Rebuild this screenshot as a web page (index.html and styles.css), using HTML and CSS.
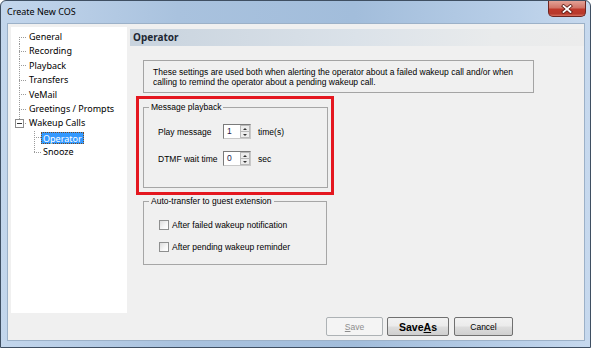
FILE: index.html
```html
<!DOCTYPE html>
<html lang="en">
<head>
    <meta charset="UTF-8">
    <title>Create New COS</title>
    <link rel="stylesheet" href="styles.css">
</head>
<body>
    <div class="window">
        <div class="titlebar">
            <span class="title">Create New COS</span>
            <button class="close" title="Close">
                <svg width="12" height="10" viewBox="0 0 12 10">
                    <path d="M2.5 2 L9.5 8 M9.5 2 L2.5 8" stroke="#5a1a14" stroke-width="3.4" stroke-linecap="square"/>
                    <path d="M2.5 2 L9.5 8 M9.5 2 L2.5 8" stroke="#ffffff" stroke-width="1.8" stroke-linecap="square"/>
                </svg>
            </button>
        </div>

        <div class="client">
            <div class="main">
                <!-- arbre des pages -->
                <div class="tree">
                    <div class="node first"><span class="twig"></span><span class="label">General</span></div>
                    <div class="node"><span class="twig"></span><span class="label">Recording</span></div>
                    <div class="node"><span class="twig"></span><span class="label">Playback</span></div>
                    <div class="node"><span class="twig"></span><span class="label">Transfers</span></div>
                    <div class="node"><span class="twig"></span><span class="label">VeMail</span></div>
                    <div class="node"><span class="twig"></span><span class="label">Greetings / Prompts</span></div>
                    <div class="node last"><span class="twig"><span class="expander"></span></span><span class="label">Wakeup Calls</span></div>
                    <div class="node child"><span class="twig"></span><span class="label selected">Operator</span></div>
                    <div class="node child last"><span class="twig"></span><span class="label">Snooze</span></div>
                </div>

                <div class="pane">
                    <div class="pane-head">Operator</div>

                    <div class="note">
                        These settings are used both when alerting the operator about a failed wakeup call and/or when<br>
                        calling to remind the operator about a pending wakeup call.
                    </div>

                    <div class="highlight">
                        <fieldset class="group group-play">
                            <legend>Message playback</legend>
                            <div class="field-grid">
                                <span class="field-label">Play message</span>
                                <span class="spin"><span class="spin-value">1</span><span class="spin-arrows"><span class="up"></span><span class="down"></span></span></span>
                                <span class="unit">time(s)</span>

                                <span class="field-label">DTMF wait time</span>
                                <span class="spin"><span class="spin-value">0</span><span class="spin-arrows"><span class="up"></span><span class="down"></span></span></span>
                                <span class="unit">sec</span>
                            </div>
                        </fieldset>
                    </div>

                    <fieldset class="group group-auto">
                        <legend>Auto-transfer to guest extension</legend>
                        <div class="checks">
                            <label class="check"><span class="box"></span>After failed wakeup notification</label>
                            <label class="check"><span class="box"></span>After pending wakeup reminder</label>
                        </div>
                    </fieldset>
                </div>
            </div>

            <div class="buttons">
                <button class="btn btn-save" disabled><u>S</u>ave</button>
                <button class="btn btn-saveas">Save<u>A</u>s</button>
                <button class="btn btn-cancel">Cancel</button>
            </div>
        </div>
    </div>
</body>
</html>
```

FILE: styles.css
```css
body {
    margin: 0;
    padding: 0;
    background-color: #ffffff;
}

.window {
    width: 591px;
    height: 348px;
    box-sizing: border-box;
    border: 1px solid #3f4f62;
    border-radius: 6px 6px 0 0;
    background: linear-gradient(to right, #c3d6ec 0%, #a9c2de 30%, #a2bddb 60%, #b9cfe8 88%, #c7d9ee 100%);
    display: flex;
    flex-direction: column;
}

.titlebar {
    height: 22px;
    display: flex;
    align-items: flex-start;
}

.title {
    font-family: "Noto Sans", sans-serif;
    font-size: 9px;
    color: #000;
    padding: 4px 0 0 6px;
}

.close {
    margin-left: auto;
    margin-right: 4px;
    width: 38px;
    height: 16px;
    padding: 0;
    border: 1px solid #6e2520;
    border-top: none;
    border-radius: 0 0 5px 5px;
    background: linear-gradient(to bottom, #e3a196 0%, #d27568 45%, #c0392b 55%, #b7392c 85%, #d8705f 100%);
    display: flex;
    align-items: center;
    justify-content: center;
}

.client {
    flex: 1;
    margin: 0 5px 6px 6px;
    border: 1px solid #9cb1c8;
    background-color: #f0f0f0;
    padding: 3px 0 0 3px;
    display: flex;
    flex-direction: column;
}

.main {
    display: flex;
}

/* arbre */
.tree {
    width: 116px;
    height: 286px;
    box-sizing: border-box;
    background-color: #fff;
    padding: 3px 0 0 4px;
    font-family: "Noto Sans", sans-serif;
    font-size: 9px;
    color: #000;
}

.node {
    height: 14.4px;
    display: flex;
    align-items: stretch;
}

.twig {
    width: 12px;
    flex-shrink: 0;
    display: flex;
    align-items: center;
    background:
        repeating-linear-gradient(to bottom, #9a9a9a 0 1px, transparent 1px 2px) 4px 0 / 1px 100% no-repeat,
        repeating-linear-gradient(to right, #9a9a9a 0 1px, transparent 1px 2px) 4px 50% / 7px 1px no-repeat;
}

.node.first .twig {
    background:
        repeating-linear-gradient(to bottom, #9a9a9a 0 1px, transparent 1px 2px) 4px 100% / 1px 50% no-repeat,
        repeating-linear-gradient(to right, #9a9a9a 0 1px, transparent 1px 2px) 4px 50% / 7px 1px no-repeat;
}

.node.last .twig {
    background:
        repeating-linear-gradient(to bottom, #9a9a9a 0 1px, transparent 1px 2px) 4px 0 / 1px 50% no-repeat,
        repeating-linear-gradient(to right, #9a9a9a 0 1px, transparent 1px 2px) 4px 50% / 7px 1px no-repeat;
}

.node.child {
    padding-left: 15px;
}

.node.child .twig {
    width: 11px;
}

.expander {
    width: 9px;
    height: 9px;
    box-sizing: border-box;
    border: 1px solid #8c8c8c;
    background: #fff linear-gradient(#333, #333) center / 5px 1px no-repeat;
}

.label {
    padding: 0 2px;
    line-height: 14px;
    white-space: nowrap;
}

.label.selected {
    background-color: #3399ff;
    color: #fff;
    border: 1px dotted #7a4a1e;
    line-height: 11px;
    margin: 1px 0;
    padding: 0 1px;
}

/* panneau */
.pane {
    flex: 1;
    margin-left: 3px;
    padding-top: 2px;
    font-family: "Liberation Sans", Arial, sans-serif;
    font-size: 8.5px;
    color: #000;
}

.pane-head {
    height: 17px;
    line-height: 17px;
    padding-left: 3px;
    font-family: "Noto Sans", sans-serif;
    font-weight: bold;
    font-size: 10px;
    color: #1d2834;
    background: linear-gradient(to right, #c8d3de 0%, #dbe2e9 50%, #e9ebec 80%, #ececec 100%);
}

.note {
    margin: 14px 0 0 13px;
    width: 391px;
    height: 33px;
    box-sizing: border-box;
    border: 1px solid #a4a4a4;
    padding: 6px 0 0 9px;
    line-height: 10px;
    white-space: nowrap;
}

.highlight {
    margin: 3px 0 0 6px;
    width: 198px;
    height: 99px;
    box-sizing: border-box;
    border: 3px solid #e4171f;
}

.group {
    margin: 0;
    padding: 0;
    border: 1px solid #a6a6a6;
    box-sizing: border-box;
    min-inline-size: 0;
}

.group legend {
    margin-left: 5px;
    padding: 0 2px;
    line-height: 12px;
}

.group-play {
    margin: 2px 0 0 4px;
    width: 185px;
    height: 87px;
}

.field-grid {
    display: grid;
    grid-template-columns: 65px 28px auto;
    grid-auto-rows: 15px;
    row-gap: 12px;
    align-items: center;
    padding: 11px 0 0 14px;
}

.unit {
    margin-left: 7px;
}

.spin {
    display: flex;
    width: 28px;
    height: 15px;
    box-sizing: border-box;
    border: 1px solid #7b7b7b;
    border-right-color: #c8c8c8;
    border-bottom-color: #c8c8c8;
    background-color: #fff;
}

.spin-value {
    flex: 1;
    padding-left: 3px;
    line-height: 13px;
    color: #1b1b4a;
}

.spin-arrows {
    width: 10px;
    display: flex;
    flex-direction: column;
}

.spin-arrows span {
    flex: 1;
    background-color: #ececec;
    border: 1px solid #b9b9b9;
    display: flex;
    align-items: center;
    justify-content: center;
}

.spin-arrows .up {
    border-bottom-width: 0;
}

.spin-arrows .up::after {
    content: "";
    border-left: 2px solid transparent;
    border-right: 2px solid transparent;
    border-bottom: 2px solid #333;
}

.spin-arrows .down::after {
    content: "";
    border-left: 2px solid transparent;
    border-right: 2px solid transparent;
    border-top: 2px solid #333;
}

.group-auto {
    margin: 0 0 0 13px;
    width: 184px;
    height: 70px;
}

.checks {
    display: flex;
    flex-direction: column;
    gap: 9px;
    padding: 11px 0 0 15px;
}

.check {
    display: flex;
    align-items: center;
    height: 13px;
    gap: 3px;
}

.box {
    width: 10px;
    height: 10px;
    box-sizing: border-box;
    border: 1px solid #8e8f8f;
    background: linear-gradient(135deg, #dcdcdc 0%, #f6f6f6 60%, #ffffff 100%);
}

/* boutons */
.buttons {
    display: flex;
    justify-content: flex-end;
    margin-top: 4px;
    padding-right: 71px;
}

.btn {
    height: 19px;
    padding: 0;
    margin-left: 4px;
    border: 1px solid #707070;
    border-radius: 2px;
    background: linear-gradient(to bottom, #f2f2f2 0%, #ebebeb 48%, #dddddd 52%, #cfcfcf 100%);
    font-family: "Liberation Sans", Arial, sans-serif;
    font-size: 8.5px;
    color: #000;
}

.btn-save {
    width: 57px;
    border-color: #adb2b5;
    background: #f4f4f4;
    color: #8d8d8d;
}

.btn-saveas {
    width: 62px;
    font-weight: bold;
    font-size: 10.5px;
}

.btn-cancel {
    width: 59px;
    margin-left: 5px;
}
```
